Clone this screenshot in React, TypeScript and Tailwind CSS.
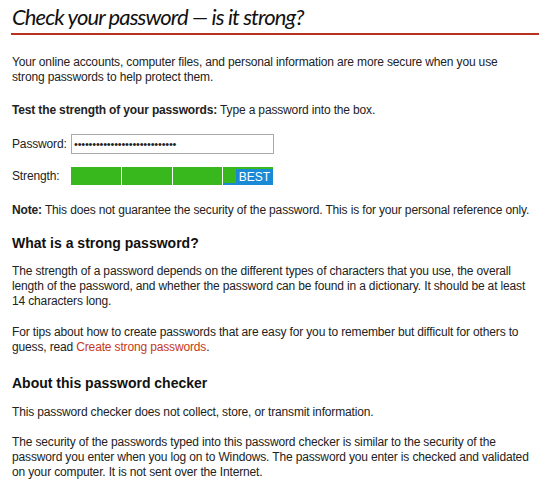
export default function App() {
  const body = "font-['Liberation_Sans',Arial,sans-serif] text-[12px] leading-[15px] tracking-[-0.15px] text-[#222]";

  return (
    <div className={`min-h-screen w-[550px] bg-white px-3 ${body}`}>
      {/* Title */}
      <div className="-mx-px border-b-2 border-[#b8321f] pb-[3px] pt-[3px]">
        <h1 className="pl-px font-['Lato',sans-serif] text-[22px] italic leading-[27px] tracking-[-0.9px] text-[#111]">
          Check your password — is it strong?
        </h1>
      </div>

      <p className="mt-[20px]">
        Your online accounts, computer files, and personal information are more secure when you use
        <br />
        strong passwords to help protect them.
      </p>

      <p className="mt-[18px]">
        <b>Test the strength of your passwords:</b> Type a password into the box.
      </p>

      {/* Password input */}
      <div className="mt-[16px] flex items-center">
        <span className="w-[59px]">Password:</span>
        <div className="flex h-[20px] w-[203px] items-center border border-[#a9a9a9] bg-white px-[2px] text-[11px] leading-none tracking-[-0.2px]">
          ••••••••••••••••••••••••••••
        </div>
      </div>

      {/* Strength meter */}
      <div className="mt-[13px] flex items-center">
        <span className="w-[59px]">Strength:</span>
        <div className="flex h-[18px] w-[202px] gap-px">
          <div className="flex-1 bg-[#38b81c]" />
          <div className="flex-1 bg-[#38b81c]" />
          <div className="flex-1 bg-[#38b81c]" />
          <div className="relative flex-1 bg-[#38b81c]">
            <div className="absolute inset-x-0 bottom-0 h-[2px] bg-[#1b8ad6]" />
            <div className="absolute bottom-0 right-0 top-[2px] flex w-[37px] items-center justify-center bg-[#1b8ad6] text-[12px] tracking-normal text-white">
              BEST
            </div>
          </div>
        </div>
      </div>

      <p className="mt-[18px]">
        <b>Note:</b> This does not guarantee the security of the password. This is for your personal reference only.
      </p>

      <h2 className="mt-[17px] text-[14px] font-bold leading-[17px] tracking-normal text-[#111]">
        What is a strong password?
      </h2>

      <p className="mt-[12px]">
        The strength of a password depends on the different types of characters that you use, the overall
        <br />
        length of the password, and whether the password can be found in a dictionary. It should be at least
        <br />
        14 characters long.
      </p>

      <p className="mt-[16px]">
        For tips about how to create passwords that are easy for you to remember but difficult for others to
        <br />
        guess, read <a className="text-[#c8381a]">Create strong passwords</a>.
      </p>

      <h2 className="mt-[20px] text-[14px] font-bold leading-[17px] tracking-normal text-[#111]">
        About this password checker
      </h2>

      <p className="mt-[13px]">This password checker does not collect, store, or transmit information.</p>

      <p className="mt-[15px]">
        The security of the passwords typed into this password checker is similar to the security of the
        <br />
        password you enter when you log on to Windows. The password you enter is checked and validated
        <br />
        on your computer. It is not sent over the Internet.
      </p>
    </div>
  );
}
